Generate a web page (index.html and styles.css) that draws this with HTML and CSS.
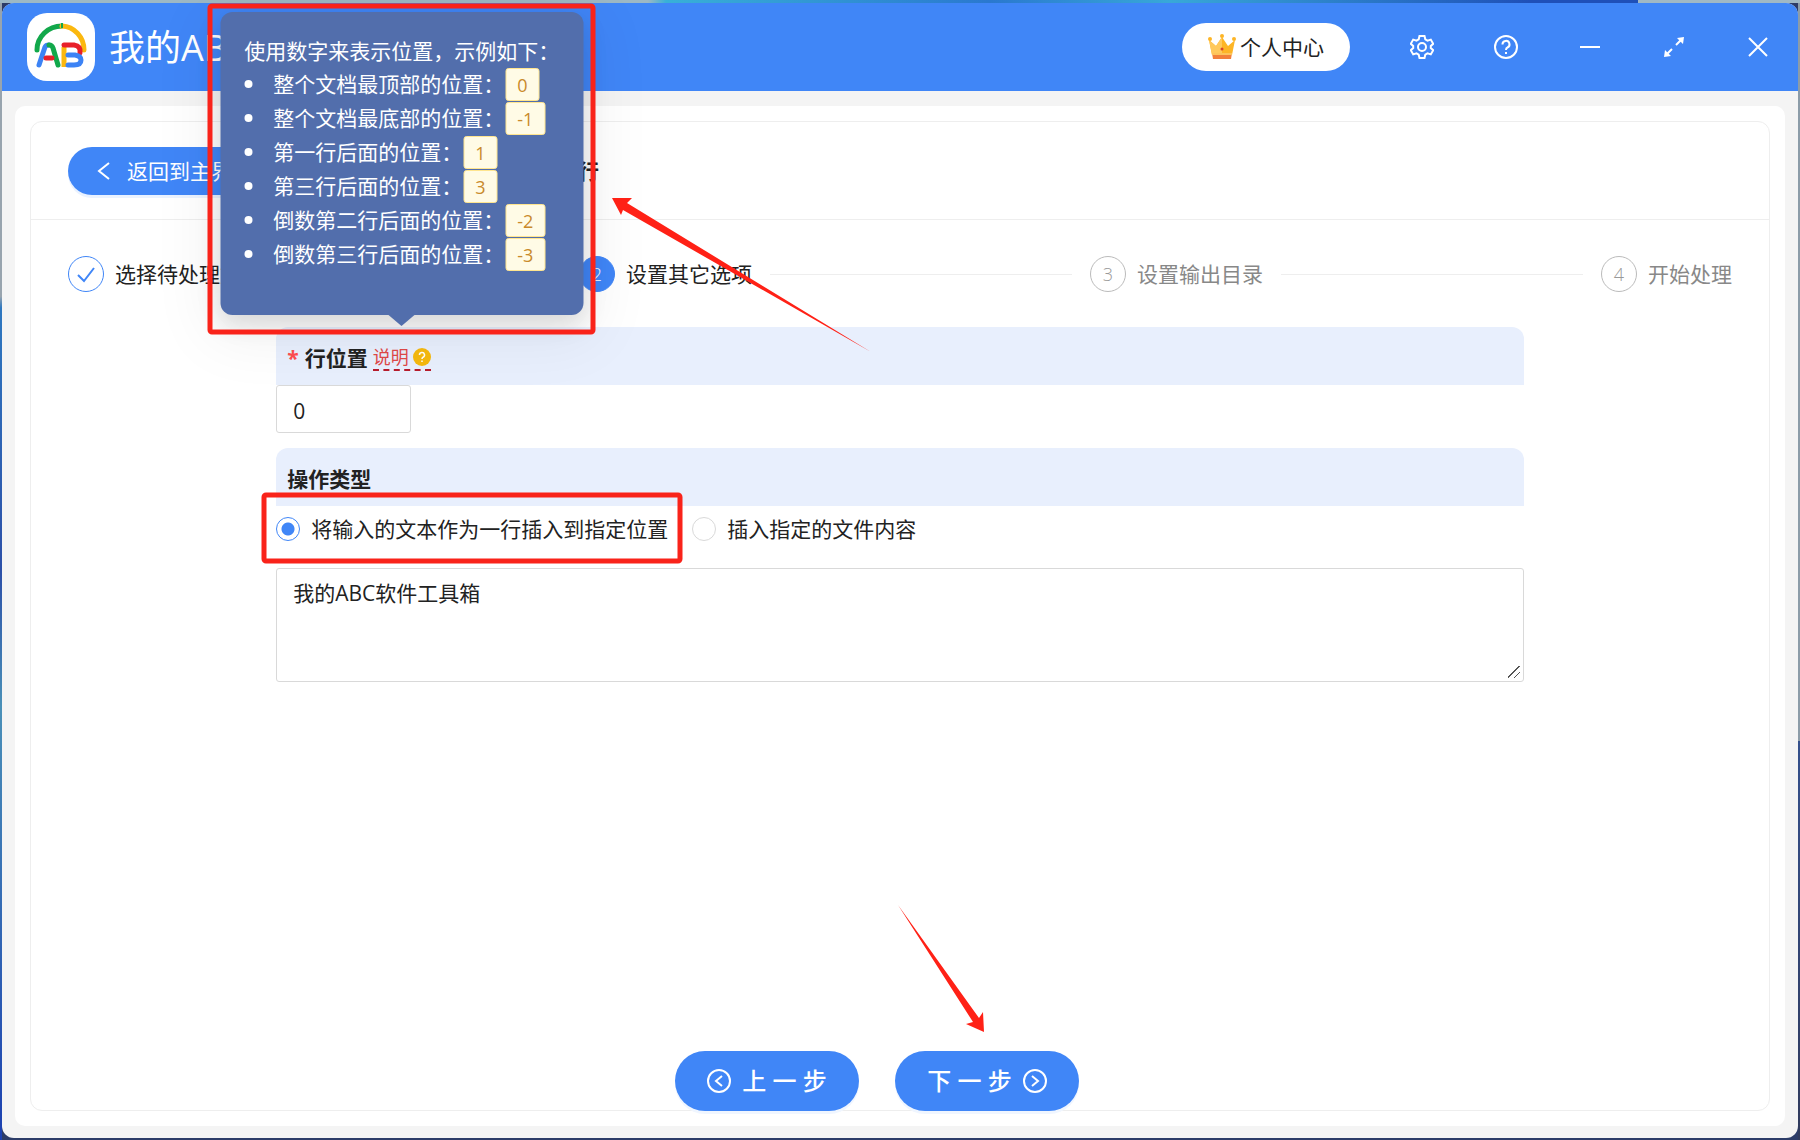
FILE: index.html
```html
<!DOCTYPE html>
<html lang="zh-CN">
  <head>
    <meta charset="UTF-8">
    <meta name="viewport" content="width=device-width, initial-scale=1.0">
    <link rel="stylesheet" href="styles.css">
    <title>我的ABC软件工具箱</title>
  </head>
  <body>
    <div class="window">
      <header class="header">
        <svg class="logo" viewBox="0 0 68 68" fill="none" stroke-width="5" stroke-linejoin="round">
          <rect width="68" height="68" rx="20" fill="#fff"/>
          <path d="M10 37a25 24 0 0 1 25-24" stroke="#12a84b" stroke-linecap="round"/>
          <path d="M57 37a23 24 0 0 0-22-24" stroke="#fbb80f" stroke-linecap="round"/>
          <path d="M35 10v5" stroke="#12a84b" stroke-width="2"/>
          <path d="M12 52l6-18q1-2 4-2" stroke="#3c83f5" stroke-linecap="round"/>
          <path d="M22 32q3 0 4 3l5 17" stroke="#12a84b" stroke-linecap="round"/>
          <path d="M19 45h6" stroke="#e8202a" stroke-linecap="round"/>
          <path d="M37 34v20" stroke="#fbb80f"/>
          <path d="M37 32h10q7 1 6 8" stroke="#e8202a" stroke-linecap="round"/>
          <path d="M41 42h7q6 1 6 5q0 5-7 5h-6" stroke="#3c83f5" stroke-linecap="round"/>
        </svg>
        <div class="app-name">我的ABC软件工具箱</div>
        <div class="tools">
          <button class="user-btn">
            <svg width="28" height="28" viewBox="0 0 28 28">
              <path d="M1 7l7 6 6-9 6 9 7-6-3 15H4z" fill="#fdb526"/>
              <path d="M1 7l7 6 6-9v18H4z" fill="#ffc95c"/>
              <path d="M4 20h20l-1 6H5z" fill="#f2803a"/>
              <path d="M4 20h20v2H4z" fill="#fdc35a"/>
              <circle cx="14" cy="3" r="2" fill="#fdb526"/>
              <circle cx="2" cy="6" r="2" fill="#fdb526"/>
              <circle cx="26" cy="6" r="2" fill="#fdb526"/>
              <circle cx="14" cy="16" r="1.500" fill="#d8432b"/>
            </svg>
            个人中心
          </button>
          <button class="icon-btn" aria-label="设置">
            <svg viewBox="0 0 24 24"><path d="M9.500 1h5l.8 3.300 2.200 1.300 3.300-1 2.400 4.200-2.400 2.200v2l2.400 2.200-2.400 4.200-3.300-1-2.200 1.300-.8 3.300h-5l-.8-3.300-2.200-1.300-3.300 1-2.400-4.200 2.400-2.200v-2L.800 8.800l2.400-4.200 3.300 1 2.200-1.300z"/><circle cx="12" cy="12" r="4"/></svg>
          </button>
          <button class="icon-btn" aria-label="帮助">
            <svg viewBox="0 0 24 24"><circle cx="12" cy="12" r="11"/><path d="M8.500 9.500a3.500 3.500 0 1 1 5 3q-1.500.7-1.500 2.500M12 17v2"/></svg>
          </button>
          <button class="icon-btn" aria-label="最小化">
            <svg viewBox="0 0 24 24"><path d="M2 12h20"/></svg>
          </button>
          <button class="icon-btn" aria-label="最大化">
            <svg viewBox="0 0 24 24"><path d="M14 10l6-6M10 14l-6 6"/><path d="M22 2l-1 7-6-6zM2 22l1-7 6 6z" fill="#fff" stroke="none"/></svg>
          </button>
          <button class="icon-btn" aria-label="关闭">
            <svg viewBox="0 0 24 24"><path d="M3 3l18 18M21 3L3 21"/></svg>
          </button>
        </div>
      </header>

      <main class="card">
        <section class="panel">
          <div class="panel-head">
            <button class="back-btn">
              <svg width="20" height="20" viewBox="0 0 20 20"><path d="M14 2L4 10l10 8"/></svg>
              返回到主界面
            </button>
            <h1 class="title">在文本的指定位置插入新的行</h1>
          </div>

          <ol class="steps">
            <li class="step done">
              <span class="step-icon"><svg width="18" height="18" viewBox="0 0 18 18"><path d="M1 10l6 6L17 3"/></svg></span>
              选择待处理文件
            </li>
            <li class="step active"><span class="step-icon">2</span>设置其它选项</li>
            <li class="step"><span class="step-icon">3</span>设置输出目录</li>
            <li class="step"><span class="step-icon">4</span>开始处理</li>
          </ol>

          <form class="form">
            <div class="label-bar">
              <span class="required">*</span>
              <label for="position">行位置</label>
              <span class="hint">
                说明
                <svg width="18" height="18" viewBox="0 0 18 18"><circle cx="9" cy="9" r="9" fill="#f5b90f"/><path d="M6.500 7a2.500 2.500 0 1 1 3.500 2.200q-1 .5-1 1.800M9 12.500v1.500" fill="none" stroke="#fff" stroke-width="1.500"/></svg>
                <div class="tooltip" role="tooltip">
                  使用数字来表示位置，示例如下：
                  <ul>
                    <li>整个文档最顶部的位置：<span class="tag">0</span></li>
                    <li>整个文档最底部的位置：<span class="tag">-1</span></li>
                    <li>第一行后面的位置：<span class="tag">1</span></li>
                    <li>第三行后面的位置：<span class="tag">3</span></li>
                    <li>倒数第二行后面的位置：<span class="tag">-2</span></li>
                    <li>倒数第三行后面的位置：<span class="tag">-3</span></li>
                  </ul>
                </div>
              </span>
            </div>
            <input class="number" id="position" type="text" value="0">

            <div class="label-bar">操作类型</div>
            <div class="radios">
              <label><input type="radio" name="type" checked>将输入的文本作为一行插入到指定位置</label>
              <label><input type="radio" name="type">插入指定的文件内容</label>
            </div>
            <textarea class="content" aria-label="文本内容">我的ABC软件工具箱</textarea>
          </form>

          <div class="footer">
            <button class="nav-btn">
              <svg width="24" height="24" viewBox="0 0 24 24"><circle cx="12" cy="12" r="11"/><path d="M15 7l-6 5 6 5"/></svg>
              上 一 步
            </button>
            <button class="nav-btn">
              下 一 步
              <svg width="24" height="24" viewBox="0 0 24 24"><circle cx="12" cy="12" r="11"/><path d="M9 7l6 5-6 5"/></svg>
            </button>
          </div>
        </section>
      </main>
    </div>

    <svg class="marks" width="1800" height="1140" viewBox="0 0 1800 1140">
      <rect x="210" y="6" width="383" height="326" rx="2"/>
      <rect x="264" y="495" width="416" height="66" rx="2"/>
      <path d="M612 198l20 0-5 5L871 352 623 210l-2 5z"/>
      <path d="M984 1032l-1-20-4 6L898 905l75 117-7 2z"/>
    </svg>
  </body>
</html>
```

FILE: styles.css
```css
* {
  box-sizing: border-box;
}

body {
  margin: 0;
  padding: 3px 2px 2px;
  height: 100vh;
  background:
    linear-gradient(to right, #9db8c4 36%, #38b0d8 37%, #2a78cf 55%, #38a8d8 65%, #1f50b8 85%, #1f50b8 91%, #a0b8c4 91%) top / 100% 3px no-repeat,
    linear-gradient(#98a4ae 26%, #2f78c0 27%, #2c50a8 50%, #4a90b8 62%, #1c40b0 100%) left / 2px 100% no-repeat,
    linear-gradient(#8c9ca8 65%, #34508c 65%, #303a5c 100%) right / 2px 100% no-repeat,
    #2c3c68;
  font-family: "Open Sans", "Noto Sans CJK SC", sans-serif;
  font-size: 21px;
  line-height: 32px;
  color: #222;
}

button,
input,
textarea {
  font: inherit;
  color: inherit;
}

button {
  padding: 0;
  border: none;
  background: none;
  cursor: pointer;
}

svg {
  flex: none;
}

.window {
  display: flex;
  flex-direction: column;
  height: 100%;
  border-radius: 12px;
  background-color: #f4f4f4;
}

.header {
  display: flex;
  align-items: center;
  height: 88px;
  padding: 0 28px 0 25px;
  border-radius: 12px 12px 0 0;
  background-color: #4086f7;
  color: #fff;
}

.logo {
  width: 68px;
  height: 68px;
}

.app-name {
  margin-left: 14px;
  padding-top: 2px;
  font-size: 36px;
  line-height: 48px;
}

.tools {
  display: flex;
  align-items: center;
  gap: 60px;
  margin-left: auto;
}

.user-btn {
  display: flex;
  align-items: center;
  justify-content: center;
  gap: 4px;
  width: 168px;
  height: 48px;
  border-radius: 24px;
  background-color: #fff;
  color: #222;
}

.icon-btn {
  width: 24px;
  height: 24px;
}

.icon-btn svg {
  display: block;
  fill: none;
  stroke: #fff;
  stroke-width: 2;
}

.card {
  flex: 1;
  display: flex;
  margin: 15px 13px 12px;
  padding: 15px;
  border-radius: 10px;
  background-color: #fff;
}

.panel {
  flex: 1;
  display: flex;
  flex-direction: column;
  border: 1px solid #eee;
  border-radius: 12px;
}

.panel-head {
  display: flex;
  align-items: center;
  gap: 42px;
  height: 98px;
  padding: 0 37px;
  border-bottom: 1px solid #eee;
}

.back-btn {
  display: flex;
  align-items: center;
  justify-content: center;
  gap: 12px;
  width: 216px;
  height: 48px;
  padding-right: 4px;
  border-radius: 24px;
  background-color: #4086f7;
  box-shadow: 0 3px 0 #eaf2ff;
  color: #fff;
}

.back-btn svg {
  fill: none;
  stroke: #fff;
  stroke-width: 2;
}

.title {
  margin: 0;
  font-size: 21px;
  font-weight: 700;
}

.steps {
  display: flex;
  margin: 0;
  padding: 36px 37px 35px;
  list-style: none;
}

.step {
  flex: 1;
  display: flex;
  align-items: center;
  gap: 11px;
  height: 36px;
  margin-right: 18px;
  white-space: nowrap;
  color: #888;
}

.step::after {
  content: "";
  flex: 1;
  height: 1px;
  margin-left: 7px;
  background-color: #eee;
}

.step:last-child {
  flex: none;
  margin-right: 0;
}

.step:last-child::after {
  display: none;
}

.step-icon {
  display: flex;
  align-items: center;
  justify-content: center;
  width: 36px;
  height: 36px;
  border: 1px solid #bbb;
  border-radius: 50%;
  font-size: 18px;
  font-weight: 300;
  color: #999;
}

.step-icon svg {
  fill: none;
  stroke: #4086f7;
  stroke-width: 2;
}

.done,
.active {
  color: #222;
}

.done .step-icon {
  border-color: #4086f7;
}

.active .step-icon {
  border-color: #4086f7;
  background-color: #4086f7;
  color: #fff;
}

.form {
  width: 75%;
  padding: 0 28px;
  align-self: center;
}

.label-bar {
  display: flex;
  align-items: center;
  height: 58px;
  padding: 4px 11px 0;
  border-radius: 12px 12px 0 0;
  background-color: #e8effd;
  font-weight: 700;
}

.required {
  margin-right: 6px;
  color: #ff4d4f;
}

.hint {
  position: relative;
  display: flex;
  align-items: center;
  gap: 4px;
  height: 26px;
  margin-left: 5px;
  border-bottom: 2px dashed #b81c2c;
  font-size: 18px;
  font-weight: 400;
  color: #e04848;
}

.tooltip {
  position: absolute;
  bottom: 54px;
  left: 50%;
  z-index: 2;
  width: 363px;
  height: 303px;
  padding: 23px 24px;
  border-radius: 12px;
  background-color: #526eac;
  box-shadow: 0 9px 24px rgba(0, 0, 0, 0.12), 0 12px 60px 16px rgba(0, 0, 0, 0.05);
  transform: translateX(-50%);
  font-size: 21px;
  white-space: nowrap;
  color: #fff;
}

.tooltip::after {
  content: "";
  position: absolute;
  top: 100%;
  left: 50%;
  margin-left: -13px;
  border: 13px solid transparent;
  border-top: 11px solid #526eac;
  border-bottom: none;
}

.tooltip ul {
  margin: 0;
  padding: 0;
  list-style: none;
}

.tooltip li {
  display: flex;
  align-items: center;
  height: 34px;
}

.tooltip li::before {
  content: "";
  width: 8px;
  height: 8px;
  margin-right: 21px;
  border-radius: 50%;
  background-color: #fff;
}

.tag {
  height: 33px;
  margin-left: 1px;
  padding: 0 11px;
  border: 1px solid #ffe58f;
  border-radius: 3px;
  background-color: #fffbe6;
  font-size: 18px;
  color: #c98a2b;
}

.number {
  display: block;
  width: 135px;
  height: 48px;
  margin-bottom: 15px;
  padding: 4px 16px 0;
  border: 1px solid #d9d9d9;
  border-radius: 3px;
}

.radios {
  display: flex;
  gap: 24px;
  height: 62px;
  padding-top: 7px;
}

.radios label {
  display: flex;
  align-items: center;
  gap: 11px;
  height: 32px;
}

.radios input {
  appearance: none;
  width: 24px;
  height: 24px;
  margin: 0;
  border: 1px solid #d9d9d9;
  border-radius: 50%;
}

.radios input:checked {
  border-color: #4086f7;
  background: radial-gradient(circle, #4086f7 6px, #fff 7px);
}

.content {
  display: block;
  width: 100%;
  height: 114px;
  padding: 8px 16px;
  border: 1px solid #d9d9d9;
  border-radius: 3px;
}

.content::-webkit-resizer {
  background: linear-gradient(135deg, transparent 45%, #555 45%, #555 54%, transparent 54%, transparent 71%, #555 71%, #555 79%, transparent 79%) 0 0 / 12px 12px no-repeat;
}

.footer {
  display: flex;
  justify-content: center;
  gap: 36px;
  margin-top: auto;
  margin-bottom: -1px;
  padding-right: 46px;
}

.nav-btn {
  display: flex;
  align-items: center;
  justify-content: center;
  gap: 11px;
  width: 184px;
  height: 60px;
  border-radius: 30px;
  background-color: #4086f7;
  box-shadow: 0 3px 0 #f0f6ff;
  font-size: 24px;
  font-weight: 500;
  color: #fff;
}

.nav-btn svg {
  fill: none;
  stroke: #fff;
  stroke-width: 2;
}

/* red boxes and arrows over the window */
.marks {
  position: absolute;
  top: 0;
  left: 0;
  z-index: 3;
  pointer-events: none;
}

.marks rect {
  fill: none;
  stroke: #f9231a;
  stroke-width: 5;
}

.marks path {
  fill: #ff2116;
}
```
